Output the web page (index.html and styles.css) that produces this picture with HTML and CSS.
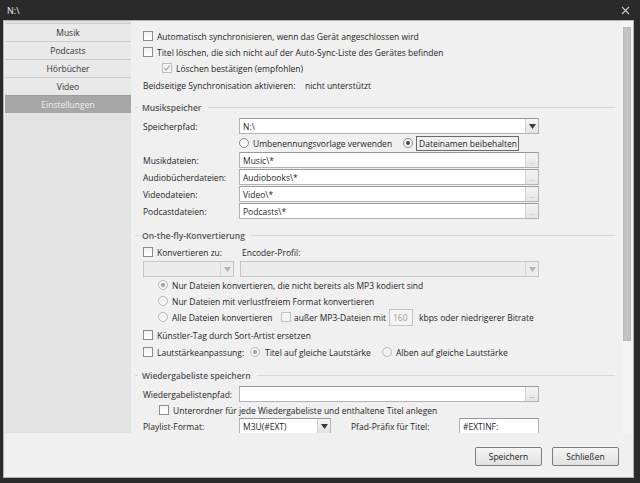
FILE: index.html
```html
<!DOCTYPE html>
<html lang="de">
<head>
<meta charset="utf-8">
<title>N:\</title>
<link rel="stylesheet" href="styles.css">
</head>
<body>
<div class="window">
  <div class="titlebar">
    <span class="title">N:\</span>
    <svg class="close" width="9" height="9" viewBox="0 0 9 9"><path d="M1 1L8 8M8 1L1 8" stroke="#c4c4c4" stroke-width="1.2" fill="none"/></svg>
  </div>
  <div class="client">
    <div class="main">
      <nav class="sidebar">
        <div class="nav-item">Musik</div>
        <div class="nav-item">Podcasts</div>
        <div class="nav-item">Hörbücher</div>
        <div class="nav-item">Video</div>
        <div class="nav-item active">Einstellungen</div>
      </nav>
      <div class="content">
        <div class="row"><span class="cb"></span><span>Automatisch synchronisieren, wenn das Gerät angeschlossen wird</span></div>
        <div class="row"><span class="cb"></span><span>Titel löschen, die sich nicht auf der Auto-Sync-Liste des Gerätes befinden</span></div>
        <div class="row ind-a"><span class="cb disabled"><svg width="8" height="8" viewBox="0 0 8 8"><path d="M1.2 4.2L3 6L6.8 1.6" stroke="#a9a9a9" stroke-width="1.2" fill="none"/></svg></span><span>Löschen bestätigen (empfohlen)</span></div>
        <div class="row mt1"><span class="sync-label">Beidseitige Synchronisation aktivieren:</span><span>nicht unterstützt</span></div>

        <div class="group mt6"><span class="dash"></span><span class="gtitle">Musikspeicher</span><span class="gline"></span></div>
        <div class="row mt3"><span class="label">Speicherpfad:</span>
          <div class="combo w300"><span class="val">N:\</span><span class="arrow"><svg width="7" height="5" viewBox="0 0 7 5"><path d="M0 0H7L3.5 5Z" fill="#3a3a3a"/></svg></span></div>
        </div>
        <div class="row mt1 radio-row">
          <span class="opt1"><span class="rb"></span><span>Umbenennungsvorlage verwenden</span></span>
          <span class="rb checked"></span><span class="focus">Dateinamen beibehalten</span>
        </div>
        <div class="row mt1"><span class="label">Musikdateien:</span><div class="tf w300"><span class="val">Music\*</span><span class="browse">...</span></div></div>
        <div class="row mt1"><span class="label">Audiobücherdateien:</span><div class="tf w300"><span class="val">Audiobooks\*</span><span class="browse">...</span></div></div>
        <div class="row mt1"><span class="label">Videodateien:</span><div class="tf w300"><span class="val">Video\*</span><span class="browse">...</span></div></div>
        <div class="row mt1"><span class="label">Podcastdateien:</span><div class="tf w300"><span class="val">Podcasts\*</span><span class="browse">...</span></div></div>

        <div class="group mt8"><span class="dash"></span><span class="gtitle">On-the-fly-Konvertierung</span><span class="gline"></span></div>
        <div class="row mt1"><span class="cb"></span><span class="conv-label">Konvertieren zu:</span><span>Encoder-Profil:</span></div>
        <div class="row mt1">
          <div class="combo disabled w91"><span class="val"></span><span class="arrow"><svg width="7" height="5" viewBox="0 0 7 5"><path d="M0 0H7L3.5 5Z" fill="#b4b4b4"/></svg></span></div>
          <div class="combo disabled w299 ml6"><span class="val"></span><span class="arrow"><svg width="7" height="5" viewBox="0 0 7 5"><path d="M0 0H7L3.5 5Z" fill="#b4b4b4"/></svg></span></div>
        </div>
        <div class="row ind-r"><span class="rb disabled checked"></span><span>Nur Dateien konvertieren, die nicht bereits als MP3 kodiert sind</span></div>
        <div class="row ind-r"><span class="rb disabled"></span><span>Nur Dateien mit verlustfreiem Format konvertieren</span></div>
        <div class="row ind-r"><span class="rb disabled"></span><span class="all-label">Alle Dateien konvertieren</span><span class="cb disabled-empty"></span><span class="except-label">außer MP3-Dateien mit</span><span class="num">160</span><span>kbps oder niedrigerer Bitrate</span></div>
        <div class="row mt2"><span class="cb"></span><span>Künstler-Tag durch Sort-Artist ersetzen</span></div>
        <div class="row mt1"><span class="cb"></span><span class="vol-label">Lautstärkeanpassung:</span><span class="rb disabled checked gap5"></span><span class="title-label">Titel auf gleiche Lautstärke</span><span class="rb disabled"></span><span>Alben auf gleiche Lautstärke</span></div>

        <div class="group mt7"><span class="dash"></span><span class="gtitle">Wiedergabeliste speichern</span><span class="gline"></span></div>
        <div class="row mt3"><span class="label">Wiedergabelistenpfad:</span><div class="tf w300"><span class="val"></span><span class="browse dark">...</span></div></div>
        <div class="row ind-b"><span class="cb"></span><span>Unterordner für jede Wiedergabeliste und enthaltene Titel anlegen</span></div>
        <div class="row">
          <span class="label">Playlist-Format:</span>
          <div class="combo w92"><span class="val">M3U(#EXT)</span><span class="arrow"><svg width="7" height="5" viewBox="0 0 7 5"><path d="M0 0H7L3.5 5Z" fill="#3a3a3a"/></svg></span></div>
          <span class="prefix-label">Pfad-Präfix für Titel:</span>
          <div class="tf w80"><span class="val">#EXTINF:</span></div>
        </div>
      </div>
      <div class="scrollbar"><div class="thumb"></div></div>
    </div>
    <div class="footer">
      <button class="btn">Speichern</button>
      <button class="btn">Schließen</button>
    </div>
  </div>
</div>
</body>
</html>
```

FILE: styles.css
```css
* { box-sizing: border-box; margin: 0; padding: 0; }
html, body { width: 640px; height: 483px; overflow: hidden; }
body {
  background: #2a2a2a;
  font-family: "Open Sans", "Noto Sans", sans-serif;
  font-size: 8.5px;
  color: #252525;
}
.window { display: flex; flex-direction: column; height: 483px; }
.titlebar {
  height: 20px;
  flex: none;
  display: flex;
  align-items: center;
  justify-content: space-between;
  padding: 0 10px 0 7px;
  color: #e8e8e8;
  font-size: 9px;
}
.client {
  flex: 1;
  margin: 0 6px 5px 3px;
  border: 1px solid #b2b2b2;
  background: #f0f0f0;
  display: flex;
  flex-direction: column;
}
.main { height: 412px; flex: none; display: flex; }
.sidebar {
  width: 126px;
  margin-left: 1px;
  background: #e3e3e3;
  padding-top: 2px;
}
.nav-item {
  height: 18px;
  border-top: 1px solid #cdcdcd;
  background: #e9e9e9;
  display: flex;
  align-items: center;
  justify-content: center;
  color: #333;
}
.nav-item.active { background: #a7a7a7; color: #f0f0f0; border-top-color: #9c9c9c; }

.content {
  width: 490px;
  overflow: hidden;
  padding: 7px 0 0 12px;
}
.scrollbar {
  width: 12px;
  padding: 6px 2px 0 2px;
  background: #f4f4f4;
}
.thumb {
  height: 314px;
  background: #c3c3c3;
  border: 1px solid #b9b9b9;
}

.row { display: flex; align-items: center; height: 16px; white-space: nowrap; flex: none; }
.mt1 { margin-top: 1px; }
.mt2 { margin-top: 2px; }
.mt3 { margin-top: 3px; }
.mt6 { margin-top: 6px; }
.mt7 { margin-top: 7px; }
.mt8 { margin-top: 8px; }
.ml6 { margin-left: 6px; }
.ind-a { padding-left: 19px; }
.ind-b { padding-left: 16px; }
.ind-r { padding-left: 15px; }

.cb {
  width: 10px; height: 10px; flex: none;
  border: 1px solid #8c8c8c;
  background: linear-gradient(#f2f2f2, #ffffff);
  margin-right: 4px;
  display: flex; align-items: center; justify-content: center;
}
.cb.disabled { border-color: #bdbdbd; background: #f5f5f5; }
.cb.disabled-empty { border-color: #c2c2c2; background: #f3f3f3; margin-right: 3px; }

.rb {
  width: 10px; height: 10px; flex: none;
  border: 1px solid #8c8c8c;
  border-radius: 50%;
  background: linear-gradient(#f0f0f0, #ffffff);
  margin-right: 4px;
  display: flex; align-items: center; justify-content: center;
}
.rb.checked::after {
  content: ""; width: 4px; height: 4px; border-radius: 50%; background: #444;
}
.rb.disabled { border-color: #b9b9b9; background: #f3f3f3; }
.rb.disabled.checked::after { background: #a0a0a0; }
.rb.gap5 { margin-left: 1px; margin-right: 5px; }

.sync-label { width: 162px; flex: none; }
.label { width: 96px; flex: none; }
.conv-label { width: 85px; flex: none; }
.all-label { width: 109px; flex: none; }
.except-label { width: 95px; flex: none; }
.vol-label { width: 92px; flex: none; }
.title-label { width: 117px; flex: none; }
.prefix-label { width: 108px; flex: none; margin-left: 20px; }

.group {
  margin-left: -8px;
  width: 480px;
  height: 16px;
  display: flex;
  align-items: center;
  flex: none;
}
.dash { width: 3px; height: 1px; background: #d4d4d4; margin-right: 4px; }
.gtitle { font-weight: 600; color: #555; }
.gline { flex: 1; height: 1px; background: #d9d9d9; margin-left: 6px; }

.w300 { width: 300px; }
.w299 { width: 299px; }
.w91 { width: 91px; }
.w92 { width: 92px; }
.w80 { width: 80px; }

.combo, .tf {
  height: 16px;
  flex: none;
  border: 1px solid #b3b3b3;
  border-top-color: #999;
  background: #fff;
  display: flex;
  align-items: stretch;
}
.val { flex: 1; padding-left: 3px; display: flex; align-items: center; color: #1e1e1e; }
.combo .arrow {
  width: 13px;
  flex: none;
  display: flex; align-items: center; justify-content: center;
  background: linear-gradient(#f5f5f5, #e4e4e4);
  border-left: 1px solid #cfcfcf;
}
.combo.disabled { background: #ececec; border-color: #c6c6c6; }
.combo.disabled .arrow { background: #ececec; border-left-color: #d8d8d8; }

.browse {
  width: 13px;
  flex: none;
  border-left: 1px solid #d2d2d2;
  background: linear-gradient(#f3f3f3, #e6e6e6);
  color: #b6b6b6;
  font-size: 7px;
  line-height: 1;
  display: flex; align-items: flex-end; justify-content: center;
  padding-bottom: 2px;
}
.browse.dark { color: #7a7a7a; }

.radio-row { padding-left: 96px; }
.opt1 { width: 164px; flex: none; display: flex; align-items: center; }
.radio-row .rb.checked { margin-right: 3px; }
.focus {
  height: 15px;
  border: 1px solid #6a6a6a;
  padding: 0 2px;
  display: flex; align-items: center;
  width: 103px;
}

.num {
  width: 24px; height: 17px; flex: none;
  border: 1px solid #c4c4c4;
  background: #f4f4f4;
  color: #9a9a9a;
  padding-left: 3px;
  display: flex; align-items: center;
  margin-right: 6px;
}

.footer {
  flex: 1;
  display: flex;
  justify-content: flex-end;
  align-items: flex-start;
  padding: 14px 14px 0 0;
  gap: 10px;
}
.btn {
  width: 67px; height: 19px;
  border: 1px solid #7c7c7c;
  border-radius: 2px;
  background: linear-gradient(#f5f5f5, #e1e1e1);
  font: inherit;
  color: #222;
}
```
